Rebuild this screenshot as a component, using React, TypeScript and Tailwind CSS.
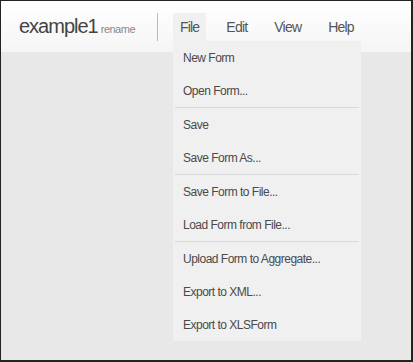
import React from 'react'

type Entry = { label: string } | { sep: true }

const FILE_MENU: Entry[] = [
  { label: 'New Form' },
  { label: 'Open Form...' },
  { sep: true },
  { label: 'Save' },
  { label: 'Save Form As...' },
  { sep: true },
  { label: 'Save Form to File...' },
  { label: 'Load Form from File...' },
  { sep: true },
  { label: 'Upload Form to Aggregate...' },
  { label: 'Export to XML...' },
  { label: 'Export to XLSForm' },
]

const TABS = ['File', 'Edit', 'View', 'Help']

function FileDropdown() {
  return (
    <div className="absolute left-0 top-full z-10 h-[300px] w-[188px] bg-[#f0f0f0] pt-[1px]">
      {FILE_MENU.map((item, i) =>
        'sep' in item ? (
          <div key={i} className="mx-[2px] -mt-[1px] mb-[1px] h-px bg-[#dadada]" />
        ) : (
          <div
            key={i}
            className="h-[33px] cursor-pointer px-[10px] text-[12px] leading-[33px] tracking-[-0.5px] text-[#4a4a4a] hover:bg-[#e4e4e4]"
          >
            {item.label}
          </div>
        ),
      )}
    </div>
  )
}

export default function App() {
  return (
    <div
      className="h-[362px] w-[413px] overflow-hidden border-b-2 border-l border-r-2 border-t border-[#222] bg-[#e8e8e8]"
      style={{ fontFamily: '"Liberation Sans", Arial, sans-serif' }}
    >
      <header className="flex h-[51px] items-start bg-gradient-to-b from-white to-[#f5f5f5]">
        <div className="ml-[18px] mt-[14px] flex w-[138px] items-baseline gap-[3px]">
          <span className="text-[20px] leading-[22px] tracking-[-1px] text-[#444]">example1</span>
          <span className="cursor-pointer text-[11px] tracking-[-0.5px] text-[#888]">rename</span>
        </div>
        <div className="mt-[12px] h-[28px] w-px bg-[#bbb]" />
        <nav className="ml-[15px] mt-[12px] flex gap-[13px]">
          {TABS.map((tab) => (
            <div key={tab} className="relative">
              <div
                className={
                  'h-[28px] cursor-pointer px-[7px] text-[14px] leading-[28px] tracking-[-0.8px] text-[#555] ' +
                  (tab === 'File' ? 'bg-[#f0f0f0]' : '')
                }
              >
                {tab}
              </div>
              {tab === 'File' && <FileDropdown />}
            </div>
          ))}
        </nav>
      </header>
    </div>
  )
}
